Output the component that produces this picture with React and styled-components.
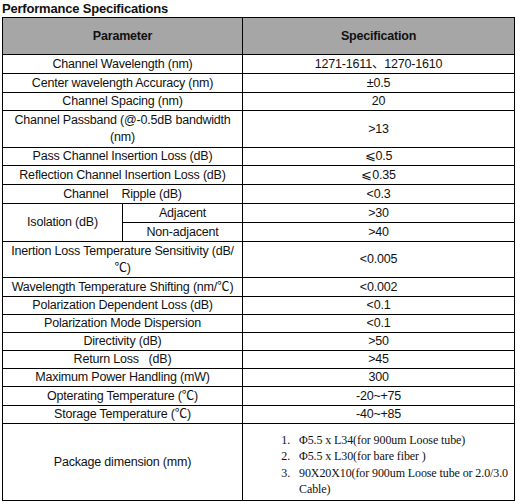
import React from "react";
import styled, { createGlobalStyle } from "styled-components";

const GlobalStyle = createGlobalStyle`
  body {
    margin: 0;
    background: #fff;
    font-family: "Liberation Sans", Arial, "Noto Sans CJK SC", sans-serif;
    color: #111;
  }
`;

const Page = styled.div`
  padding: 0 2px;
  width: 512px;
`;

const Title = styled.div`
  font-size: 13px;
  font-weight: bold;
  line-height: 17px;
  height: 17px;
  letter-spacing: -0.2px;
`;

const SpecTable = styled.table`
  width: 512px;
  table-layout: fixed;
  border-collapse: collapse;
  font-size: 12.5px;
`;

const Row = styled.tr`
  height: ${(p) => p.$h}px;
`;

const HeadCell = styled.th`
  background: #a6a6a6;
  border: 1px solid #000;
  font-weight: bold;
  font-size: 12.5px;
  letter-spacing: -0.2px;
  padding: 0;
  text-align: center;
`;

const Cell = styled.td`
  border: 1px solid #000;
  padding: 0 2px;
  text-align: center;
  vertical-align: middle;
  line-height: 17px;
  white-space: pre-wrap;
  letter-spacing: -0.2px;
`;

const PackageCell = styled(Cell)`
  text-align: left;
  padding: 0;
  white-space: normal;
`;

const PackageList = styled.ol`
  margin: 0;
  padding: 5px 0 0 50px;
  font-family: "Liberation Serif", "Times New Roman", serif;
  font-size: 12px;
  line-height: 16.5px;
  letter-spacing: -0.1px;

  li {
    padding-left: 6px;
  }
`;

const rows = [
  [19, "Channel Wavelength (nm)", "1271-1611、1270-1610"],
  [19, "Center wavelength Accuracy (nm)", "±0.5"],
  [18, "Channel Spacing (nm)", "20"],
  [37, "Channel Passband (@-0.5dB bandwidth\n(nm)", ">13"],
  [18, "Pass Channel Insertion Loss (dB)", "⩽0.5"],
  [19, "Reflection Channel Insertion Loss (dB)", "⩽0.35"],
  [19, "Channel    Ripple (dB)", "<0.3"],
];

const rowsAfter = [
  [36, "Inertion Loss Temperature Sensitivity (dB/\n℃)", "<0.005"],
  [19, "Wavelength Temperature Shifting (nm/℃)", "<0.002"],
  [18, "Polarization Dependent Loss (dB)", "<0.1"],
  [18, "Polarization Mode Dispersion", "<0.1"],
  [18, "Directivity (dB)", ">50"],
  [17, "Return Loss   (dB)", ">45"],
  [18, "Maximum Power Handling (mW)", "300"],
  [19, "Opterating Temperature (℃)", "-20~+75"],
  [18, "Storage Temperature (℃)", "-40~+85"],
];

const renderRow = ([h, label, value]) => (
  <Row key={label} $h={h}>
    <Cell colSpan={2}>{label}</Cell>
    <Cell>{value}</Cell>
  </Row>
);

export default function App() {
  return (
    <Page>
      <GlobalStyle />
      <Title>Performance Specifications</Title>
      <SpecTable>
        <colgroup>
          <col style={{ width: 120 }} />
          <col style={{ width: 120 }} />
          <col style={{ width: 272 }} />
        </colgroup>
        <tbody>
          <Row $h={37}>
            <HeadCell colSpan={2}>Parameter</HeadCell>
            <HeadCell>Specification</HeadCell>
          </Row>
          {rows.map(renderRow)}
          <Row $h={19}>
            <Cell rowSpan={2}>Isolation (dB)</Cell>
            <Cell>Adjacent</Cell>
            <Cell>&gt;30</Cell>
          </Row>
          <Row $h={19}>
            <Cell>Non-adjacent</Cell>
            <Cell>&gt;40</Cell>
          </Row>
          {rowsAfter.map(renderRow)}
          <Row $h={77}>
            <Cell colSpan={2}>Package dimension (mm)</Cell>
            <PackageCell>
              <PackageList>
                <li>Φ5.5 x L34(for 900um Loose tube)</li>
                <li>Φ5.5 x L30(for bare fiber )</li>
                <li>
                  90X20X10(for 900um Loose tube or 2.0/3.0
                  <br />
                  Cable)
                </li>
              </PackageList>
            </PackageCell>
          </Row>
        </tbody>
      </SpecTable>
    </Page>
  );
}
